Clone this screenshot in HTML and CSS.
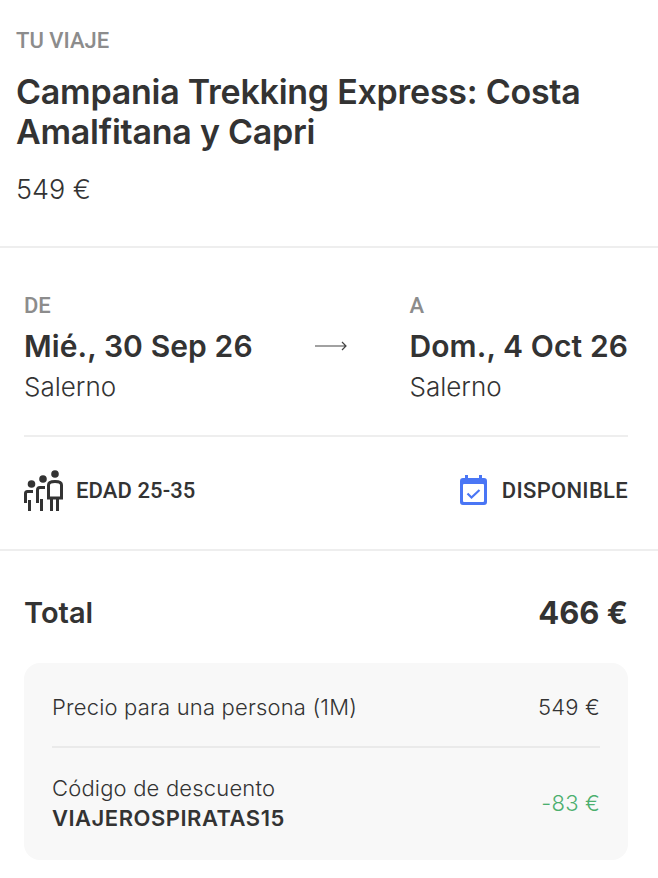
FILE: index.html
```html
<!DOCTYPE html>
<html lang="es">
<head>
	<meta charset="UTF-8">
	<title>Tu viaje</title>
	<link rel="stylesheet" href="styles.css">
</head>
<body>
	<div class="trip">
		<div class="eyebrow">TU VIAJE</div>
		<h1>Campania Trekking Express: Costa Amalfitana y Capri</h1>
		<div class="trip-price">549 €</div>
	</div>
	<div class="details">
		<div class="route">
			<div class="stop">
				<div class="stop-label">DE</div>
				<div class="stop-date">Mié., 30 Sep 26</div>
				<div class="stop-city">Salerno</div>
			</div>
			<svg class="arrow" width="32" height="12" viewBox="0 0 32 12" fill="none" stroke="#444" stroke-width="1.2">
				<path d="M0 6H31M27 2l4 4-4 4"/>
			</svg>
			<div class="stop">
				<div class="stop-label">A</div>
				<div class="stop-date">Dom., 4 Oct 26</div>
				<div class="stop-city">Salerno</div>
			</div>
		</div>
		<div class="facts">
			<div class="fact">
				<svg width="40" height="41" viewBox="0 0 40 41" fill="#333">
					<circle cx="31" cy="4" r="3.8"/>
					<circle cx="19" cy="9" r="3.8"/>
					<circle cx="7.500" cy="14" r="3.800"/>
					<g fill="none" stroke="#333" stroke-width="3">
						<path d="M31 11.500c-3 0-6.500 1-6.500 3.500v13h13V15c0-2.500-3.500-3.500-6.500-3.500z"/>
						<path d="M27.500 28v13M33.500 28v13"/>
						<path d="M21 17.500h-5c-1.500 0-2.500 1-2.500 2.500v13"/>
						<path d="M17.500 29v12"/>
						<path d="M9 21.500H3.500c-1 0-2 .8-2 2V33"/>
						<path d="M5.500 30v11"/>
					</g>
				</svg>
				<span>EDAD 25-35</span>
			</div>
			<div class="fact fact-status">
				<svg width="27" height="30" viewBox="0 0 27 30">
					<path fill="#4a76f5" d="M5 0h3v3h11V0h3v3h2a3 3 0 0 1 3 3v21a3 3 0 0 1-3 3H3a3 3 0 0 1-3-3V6a3 3 0 0 1 3-3h2z"/>
					<rect x="3" y="9" width="21" height="18" rx="1" fill="#fff"/>
					<path d="M7.500 18.500l4 4 8-7.500" fill="none" stroke="#4a76f5" stroke-width="2.200"/>
				</svg>
				<span>DISPONIBLE</span>
			</div>
		</div>
	</div>
	<div class="summary">
		<div class="total">
			<span>Total</span>
			<span class="total-amount">466 €</span>
		</div>
		<div class="breakdown">
			<div class="line line-price">
				<span>Precio para una persona (1M)</span>
				<span>549 €</span>
			</div>
			<div class="line line-discount">
				<div>
					Código de descuento
					<div class="code">VIAJEROSPIRATAS15</div>
				</div>
				<span class="discount">-83 €</span>
			</div>
		</div>
	</div>
</body>
</html>
```

FILE: styles.css
```css
*{
	margin: 0;
	padding: 0;
	box-sizing: border-box;
}
body{
	font-family: "Inter", "Liberation Sans", sans-serif;
	color: #333;
	background-color: #fff;
}
.trip{
	padding: 28px 16px 40px;
	border-bottom: 2px solid #eee;
}
.eyebrow,.stop-label{
	font-family: "Roboto", "Liberation Sans", sans-serif;
	font-size: 22px;
	line-height: 26px;
	font-weight: 500;
	color: #8c8c8c;
}
h1{
	font-size: 34px;
	line-height: 40px;
	font-weight: 600;
	letter-spacing: -0.25px;
	margin-top: 18px;
}
.trip-price{
	font-size: 27px;
	line-height: 32px;
	font-weight: 300;
	margin-top: 22px;
}
.details{
	padding: 45px 30px 0 24px;
	border-bottom: 2px solid #eee;
}
.route{
	display: flex;
	justify-content: space-between;
	align-items: center;
	padding-bottom: 32px;
	border-bottom: 2px solid #eee;
}
.stop-date{
	font-size: 30px;
	line-height: 36px;
	font-weight: 600;
	letter-spacing: 0.1px;
	margin-top: 9px;
}
.stop-city{
	font-size: 26px;
	line-height: 32px;
	font-weight: 300;
	margin-top: 7px;
}
.arrow{
	margin-top: -4px;
}
.facts{
	display: flex;
	justify-content: space-between;
	align-items: center;
	height: 112px;
	padding-bottom: 6px;
}
.fact{
	display: flex;
	align-items: center;
	gap: 12px;
	font-family: "Roboto", "Liberation Sans", sans-serif;
	font-size: 22px;
	font-weight: 500;
	letter-spacing: 0.1px;
}
.fact-status{
	gap: 15px;
	letter-spacing: 0.3px;
}
.summary{
	padding: 42px 30px 18px 24px;
}
.total{
	display: flex;
	justify-content: space-between;
	align-items: center;
	font-size: 29px;
	line-height: 40px;
	font-weight: 600;
}
.total-amount{
	font-size: 31px;
	font-weight: 700;
}
.breakdown{
	margin-top: 30px;
	padding: 0 28px;
	background-color: #f8f8f8;
	border-radius: 16px;
}
.line{
	display: flex;
	justify-content: space-between;
	align-items: center;
	font-size: 22px;
	font-weight: 300;
	line-height: 30px;
	letter-spacing: 0.18px;
}
.line-price{
	padding: 29px 0 24px;
	border-bottom: 2px solid #eaeaea;
}
.line-discount{
	padding: 25px 0 27px;
}
.code{
	font-weight: 600;
	letter-spacing: 0.5px;
}
.discount{
	color: #4caf6e;
}
```
